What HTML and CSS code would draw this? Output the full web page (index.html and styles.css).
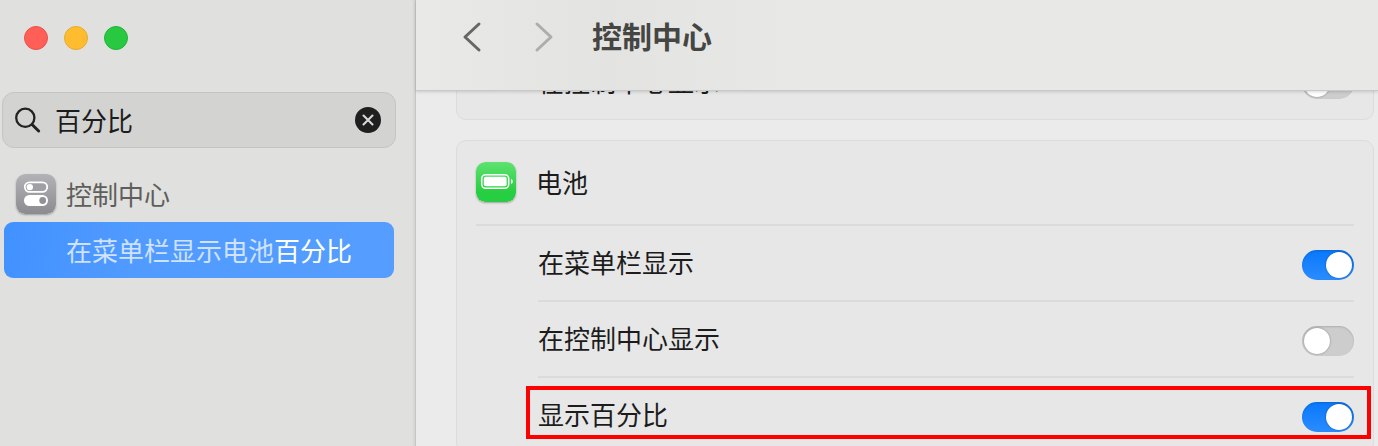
FILE: index.html
```
<!DOCTYPE html>
<html lang="zh-CN">
<head>
    <meta charset="UTF-8">
    <meta name="viewport" content="width=device-width, initial-scale=1.0">
    <title>控制中心</title>
    <link rel="stylesheet" href="styles.css">
</head>
<body>
    <aside class="sidebar">
        <div class="lights">
            <button class="light red" aria-label="关闭"></button>
            <button class="light yellow" aria-label="最小化"></button>
            <button class="light green" aria-label="缩放"></button>
        </div>
        <div class="search">
            <svg width="26" height="26" viewBox="0 0 26 26" fill="none" stroke="#222" stroke-linecap="round">
                <circle cx="10.3" cy="10.8" r="9.1" stroke-width="2.3"/>
                <path d="M17.3 17.8L23.600 24" stroke-width="3"/>
            </svg>
            <input type="text" value="百分比" aria-label="搜索">
            <button class="clear" aria-label="清除">
                <svg width="26" height="26" viewBox="0 0 26 26">
                    <circle cx="13" cy="13" r="13" fill="#1f1f1f"/>
                    <path d="M8.5 8.5l9 9M17.5 8.5l-9 9" stroke="#d8d8d6" stroke-width="2.1" stroke-linecap="round"/>
                </svg>
            </button>
        </div>
        <nav class="results">
            <a class="group" href="#control">
                <svg class="appicon" width="40" height="40" viewBox="0 0 40 40">
                    <defs>
                        <linearGradient id="gray" x1="0" y1="0" x2="0" y2="1">
                            <stop offset="0" stop-color="#b3b2b7"/>
                            <stop offset="1" stop-color="#8c8b90"/>
                        </linearGradient>
                    </defs>
                    <rect width="40" height="40" rx="9" fill="url(#gray)"/>
                    <rect x="8.8" y="8.3" width="22.4" height="9.6" rx="4.8" fill="#a09fa4" stroke="#fff" stroke-width="1.8"/>
                    <circle cx="13.8" cy="13.1" r="3.2" fill="#fff"/>
                    <rect x="8" y="21" width="24" height="11" rx="5.5" fill="#fff"/>
                    <circle cx="26.7" cy="26.5" r="3.4" fill="#929196"/>
                </svg>
                <span>控制中心</span>
            </a>
            <a class="hit" href="#percent">在菜单栏显示电池<b>百分比</b></a>
        </nav>
    </aside>

    <main class="main">
        <header class="toolbar">
            <button class="arrow" aria-label="后退">
                <svg width="20" height="32" viewBox="0 0 20 32"><path d="M17 3L3 16l14 13" fill="none" stroke="#666664" stroke-width="3" stroke-linecap="round" stroke-linejoin="round"/></svg>
            </button>
            <button class="arrow" aria-label="前进" disabled>
                <svg width="20" height="32" viewBox="0 0 20 32"><path d="M3 3l14 13L3 29" fill="none" stroke="#adadab" stroke-width="3" stroke-linecap="round" stroke-linejoin="round"/></svg>
            </button>
            <h1>控制中心</h1>
        </header>
        <div class="content">
            <section class="card scrolled">
                <div class="row">
                    <label for="prevControl">在控制中心显示</label>
                    <input type="checkbox" class="switch" id="prevControl">
                </div>
            </section>
            <section class="card" id="control">
                <div class="cardhead">
                    <svg class="appicon" width="40" height="40" viewBox="0 0 40 40">
                        <defs>
                            <linearGradient id="lime" x1="0" y1="0" x2="0" y2="1">
                                <stop offset="0" stop-color="#5ee270"/>
                                <stop offset="0.75" stop-color="#28ce41"/>
                                <stop offset="1" stop-color="#28ce41"/>
                            </linearGradient>
                        </defs>
                        <rect width="40" height="40" rx="9" fill="url(#lime)"/>
                        <rect x="5.7" y="12.7" width="27" height="13.6" rx="4" fill="none" stroke="#fff" stroke-width="1.5"/>
                        <rect x="7.8" y="14.8" width="22.8" height="9.4" rx="2" fill="#fff"/>
                        <path d="M35 17v5c2.500-1 2.500-4 0-5z" fill="#fff"/>
                    </svg>
                    <h2>电池</h2>
                </div>
                <div class="row">
                    <label for="menubar">在菜单栏显示</label>
                    <input type="checkbox" class="switch" id="menubar" checked>
                </div>
                <div class="row">
                    <label for="center">在控制中心显示</label>
                    <input type="checkbox" class="switch" id="center">
                </div>
                <div class="row marked">
                    <label for="percent">显示百分比</label>
                    <input type="checkbox" class="switch" id="percent" checked>
                </div>
            </section>
        </div>
    </main>
</body>
</html>
```
FILE: styles.css
```
*, *::before, *::after {
    box-sizing: border-box;
}
body {
    margin: 0;
    height: 100vh;
    display: flex;
    overflow: hidden;
    background: #ebebeb;
    color: #1c1c1c;
    font-family: "Noto Sans CJK SC", sans-serif;
    font-size: 26px;
    line-height: 40px;
}
button {
    padding: 0;
    border: none;
    background: none;
}
svg {
    display: block;
    flex: none;
}
a {
    color: inherit;
    text-decoration: none;
}

/* sidebar */
.sidebar {
    flex: none;
    width: 416px;
    background: #e0e0de;
    border-right: 1px solid #c6c6c4;
    box-shadow: inset -3px 0 3px -2px #d0d0ce;
}
.lights {
    display: flex;
    gap: 16px;
    padding: 26px 24px 42px;
}
.light {
    width: 24px;
    height: 24px;
    border-radius: 50%;
    border: 1px solid;
}
.red { background: #ff5f57; border-color: #e9514a; }
.yellow { background: #febc2e; border-color: #e8aa2a; }
.green { background: #28c840; border-color: #22b437; }
.search {
    display: flex;
    align-items: center;
    height: 56px;
    margin: 0 19px 0 2px;
    padding: 0 14px 0 12px;
    background: #d3d3d1;
    border: 1px solid #c5c5c3;
    border-radius: 12px;
}
.search input {
    flex: 1;
    min-width: 0;
    padding: 0 14px;
    border: none;
    outline: none;
    background: none;
    color: #1c1c1c;
    font: inherit;
}
.results {
    padding: 26px 21px 0 4px;
}
.group {
    display: flex;
    align-items: center;
    gap: 10px;
    padding: 0 12px 8px;
    color: #5e5e5c;
}
.appicon {
    border-radius: 9px;
    box-shadow: 0 1px 2px rgba(0, 0, 0, 0.3);
}
.hit {
    display: block;
    padding: 8px 0 8px 62px;
    border-radius: 9px;
    background: linear-gradient(100deg, #4191ff, #519bff 35%, #559eff);
    color: #cfe2ff;
    white-space: nowrap;
}
.hit b {
    color: #fff;
    font-weight: normal;
}

/* right pane */
.main {
    flex: 1;
    min-width: 0;
    display: flex;
    flex-direction: column;
}
.toolbar {
    position: relative;
    z-index: 1;
    flex: none;
    display: flex;
    align-items: center;
    height: 91px;
    padding: 0 46px 16px;
    background: linear-gradient(90deg, #e9e9e7, #e3e3e1 20%, #e8e8e6 40%);
    border-bottom: 1px solid #c9c9c7;
    box-shadow: 0 1px 3px rgba(0, 0, 0, 0.15);
}
.arrow + .arrow {
    margin: 0 38px 0 52px;
}
h1, h2 {
    margin: 0;
    padding-bottom: 4px;
    font-size: 30px;
    color: #454543;
}
h2 {
    padding: 0;
    font-size: 26px;
    font-weight: normal;
    color: #1c1c1c;
}
.content {
    flex: 1;
    min-height: 0;
    overflow: hidden;
    padding: 0 4px 0 40px;
}
.card {
    margin-bottom: 20px;
    padding: 0 19px;
    background: #e7e7e7;
    border: 1px solid #dcdcdc;
    border-radius: 10px;
}
.scrolled {
    margin-top: -47px;
}
.cardhead {
    display: flex;
    align-items: center;
    gap: 20px;
    height: 85px;
    padding-bottom: 2px;
    border-bottom: 2px solid #dbdbdb;
}
.row {
    position: relative;
    display: flex;
    align-items: center;
    justify-content: space-between;
    height: 76px;
    margin-left: 62px;
    border-bottom: 2px solid #dbdbdb;
}
.row:last-child {
    height: 74px;
    border-bottom: none;
}
.row label {
    padding-bottom: 2px;
}
.switch {
    appearance: none;
    display: flex;
    width: 52px;
    height: 30px;
    margin: 4px 0 0;
    padding: 2px;
    border-radius: 15px;
    background: #cdcdcd;
    box-shadow: inset 0 1px 2px rgba(0, 0, 0, 0.15);
}
.switch::before {
    content: "";
    width: 26px;
    height: 26px;
    border-radius: 50%;
    background: #fff;
    box-shadow: 0 0 2px rgba(0, 0, 0, 0.4);
}
.switch:checked {
    justify-content: flex-end;
    background: linear-gradient(#0878fb, #2b8cff);
}
.marked::after {
    content: "";
    position: absolute;
    top: 8px;
    left: -12px;
    right: -17px;
    height: 53px;
    border: 4px solid #f00;
    pointer-events: none;
}
```
